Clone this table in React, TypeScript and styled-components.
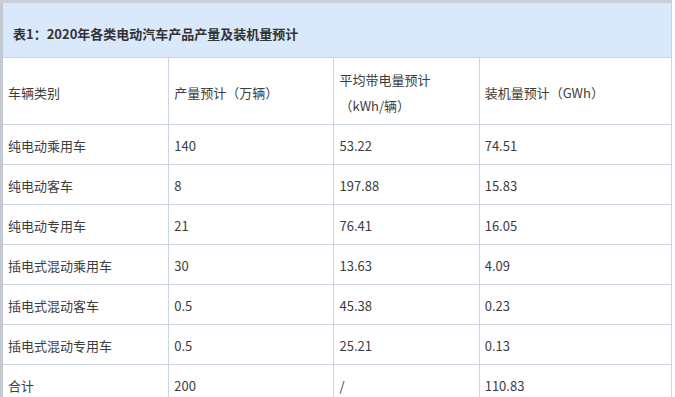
import React from "react";
import styled, { createGlobalStyle } from "styled-components";

const Global = createGlobalStyle`
  html, body { margin: 0; padding: 0; background: #ffffff; }
  body { font-family: "Noto Sans CJK SC", "Noto Sans", sans-serif; }
`;

const Frame = styled.div`
  width: 675px;
  height: 397px;
  overflow: hidden;
  background: #ffffff;
`;

const Table = styled.table`
  width: 672px;
  border-collapse: collapse;
  table-layout: fixed;
  border-top: 3px solid #c9cfd8;
  border-left: 3px solid #c3c9d2;
  font-size: 13px;
  color: #3d3d3d;
`;

const TitleCell = styled.th`
  height: 48px;
  padding: 6px 0 0 10px;
  background: #d9e8fb;
  border: 1px solid #c5d3e3;
  border-top: none;
  border-left: none;
  text-align: left;
  font-weight: bold;
  font-size: 13px;
  color: #333333;
  vertical-align: middle;
`;

const Cell = styled.td<{ $tall?: boolean }>`
  height: ${(p) => (p.$tall ? 62 : 37)}px;
  padding: ${(p) => (p.$tall ? "4px 5px 0 5px" : "2px 5px 0 5px")};
  border: 1px solid #c9d5e3;
  line-height: 26px;
  vertical-align: middle;
  text-align: left;
  white-space: nowrap;
  &:first-child { border-left: none; }
`;

const rows: [string, string, string, string][] = [
  ["纯电动乘用车", "140", "53.22", "74.51"],
  ["纯电动客车", "8", "197.88", "15.83"],
  ["纯电动专用车", "21", "76.41", "16.05"],
  ["插电式混动乘用车", "30", "13.63", "4.09"],
  ["插电式混动客车", "0.5", "45.38", "0.23"],
  ["插电式混动专用车", "0.5", "25.21", "0.13"],
  ["合计", "200", "/", "110.83"],
];

export default function App() {
  return (
    <Frame>
      <Global />
      <Table>
        <colgroup>
          <col style={{ width: 167 }} />
          <col style={{ width: 165 }} />
          <col style={{ width: 145 }} />
          <col style={{ width: 192 }} />
        </colgroup>
        <thead>
          <tr>
            <TitleCell colSpan={4}>表1：2020年各类电动汽车产品产量及装机量预计</TitleCell>
          </tr>
        </thead>
        <tbody>
          <tr>
            <Cell $tall>车辆类别</Cell>
            <Cell $tall>产量预计（万辆）</Cell>
            <Cell $tall>
              平均带电量预计
              <br />
              （kWh/辆）
            </Cell>
            <Cell $tall>装机量预计（GWh）</Cell>
          </tr>
          {rows.map((r) => (
            <tr key={r[0]}>
              {r.map((c, i) => (
                <Cell key={i}>{c}</Cell>
              ))}
            </tr>
          ))}
        </tbody>
      </Table>
    </Frame>
  );
}
